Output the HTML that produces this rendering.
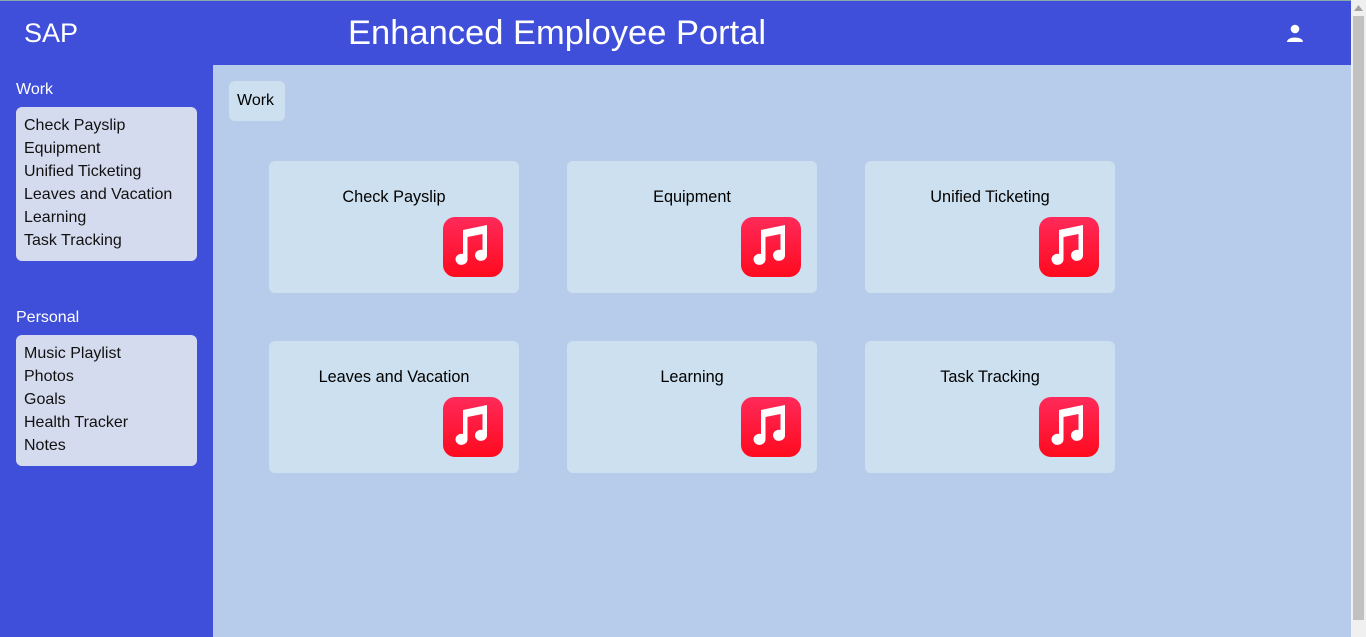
<!DOCTYPE html>
<html><head><style>
*{margin:0;padding:0;box-sizing:border-box}
body{width:1366px;height:637px;overflow:hidden;font-family:"Liberation Sans",sans-serif;background:#b7cceb;position:relative}
.top{position:absolute;left:0;top:0;width:1351px;height:65px;background:#3f4fd9;border-top:1px solid #8aa;color:#fff}
.sap{position:absolute;left:24px;top:17px;font-size:27px}
.title{position:absolute;left:348px;top:13px;font-size:34.5px}
.side{position:absolute;left:0;top:65px;width:213px;height:572px;background:#3f4fd9}
.h{position:absolute;left:16px;color:#fff;font-size:16px}
.box{position:absolute;left:16px;width:181px;background:#d5dbee;border-radius:6px;padding:7px 8px;font-size:16px;line-height:23px;color:#111}
.tab{position:absolute;left:229px;top:81px;width:56px;height:40px;background:#cce0ef;border-radius:6px;font-size:16px;padding:11px 8px}
.card{position:absolute;width:250px;height:132px;background:#cce0ef;border-radius:6px}
.card span{position:absolute;top:27px;left:0;width:100%;text-align:center;font-size:16.3px}
.ic{position:absolute;left:174px;top:56px;width:60px;height:60px;border-radius:12px;background:linear-gradient(#ff2a5a,#ff0a1e)}
.sb{position:absolute;left:1351px;top:0;width:15px;height:637px;background:#f0f0f0;z-index:5}
.th{position:absolute;left:2px;top:16px;width:11px;height:604px;background:#c1c1c1}
</style></head><body>
<div class="top"><div class="sap">SAP</div><div class="title">Enhanced Employee Portal</div>
<svg style="position:absolute;left:1285px;top:23px" width="20" height="18" viewBox="0 0 20 18"><circle cx="10" cy="5" r="4.3" fill="#fff"/><path d="M2 18 C2 12 18 12 18 18Z" fill="#fff"/></svg></div>
<div class="side">
<div class="h" style="top:16px">Work</div>
<div class="box" style="top:42px;height:154px">Check Payslip<br>Equipment<br>Unified Ticketing<br>Leaves and Vacation<br>Learning<br>Task Tracking</div>
<div class="h" style="top:244px">Personal</div>
<div class="box" style="top:270px;height:131px">Music Playlist<br>Photos<br>Goals<br>Health Tracker<br>Notes</div>
</div>
<div class="tab">Work</div>
<div class="card" style="left:269px;top:161px"><span>Check Payslip</span><div class="ic"><svg width="60" height="60" viewBox="0 0 60 60"><path d="M20 13 L44 8 L44 38 A6 5.5 0 1 1 39.5 33 L39.5 17 L24.5 20 L24.5 42 A6 5.5 0 1 1 20 37 Z" fill="#fff"/></svg></div></div>
<div class="card" style="left:567px;top:161px"><span>Equipment</span><div class="ic"><svg width="60" height="60" viewBox="0 0 60 60"><path d="M20 13 L44 8 L44 38 A6 5.5 0 1 1 39.5 33 L39.5 17 L24.5 20 L24.5 42 A6 5.5 0 1 1 20 37 Z" fill="#fff"/></svg></div></div>
<div class="card" style="left:865px;top:161px"><span>Unified Ticketing</span><div class="ic"><svg width="60" height="60" viewBox="0 0 60 60"><path d="M20 13 L44 8 L44 38 A6 5.5 0 1 1 39.5 33 L39.5 17 L24.5 20 L24.5 42 A6 5.5 0 1 1 20 37 Z" fill="#fff"/></svg></div></div>
<div class="card" style="left:269px;top:341px"><span>Leaves and Vacation</span><div class="ic"><svg width="60" height="60" viewBox="0 0 60 60"><path d="M20 13 L44 8 L44 38 A6 5.5 0 1 1 39.5 33 L39.5 17 L24.5 20 L24.5 42 A6 5.5 0 1 1 20 37 Z" fill="#fff"/></svg></div></div>
<div class="card" style="left:567px;top:341px"><span>Learning</span><div class="ic"><svg width="60" height="60" viewBox="0 0 60 60"><path d="M20 13 L44 8 L44 38 A6 5.5 0 1 1 39.5 33 L39.5 17 L24.5 20 L24.5 42 A6 5.5 0 1 1 20 37 Z" fill="#fff"/></svg></div></div>
<div class="card" style="left:865px;top:341px"><span>Task Tracking</span><div class="ic"><svg width="60" height="60" viewBox="0 0 60 60"><path d="M20 13 L44 8 L44 38 A6 5.5 0 1 1 39.5 33 L39.5 17 L24.5 20 L24.5 42 A6 5.5 0 1 1 20 37 Z" fill="#fff"/></svg></div></div>
<div class="sb"><svg style="position:absolute;left:3px;top:5px" width="9" height="6"><path d="M0 6 L4.5 0 L9 6Z" fill="#a3a3a3"/></svg><div class="th"></div></div>
</body></html>
